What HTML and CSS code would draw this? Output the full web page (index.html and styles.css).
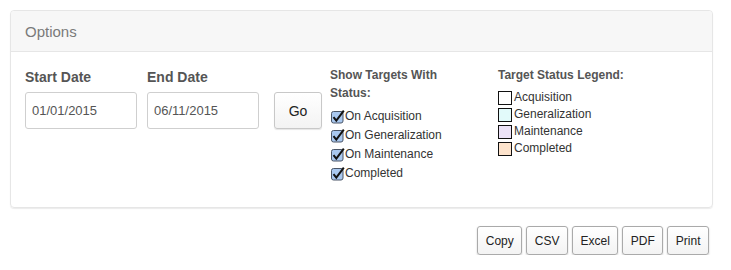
FILE: index.html
```html
<!DOCTYPE html>
<html lang="en">
<head>
  <meta charset="UTF-8" />
  <title>Options</title>
  <link rel="stylesheet" href="styles.css">
</head>
<body>
  <section class="panel">
    <div class="panel-heading">Options</div>
    <div class="panel-body">
      <div class="field">
        <label class="field-label">Start Date</label>
        <input class="date-input" type="text" value="01/01/2015">
      </div>
      <div class="field">
        <label class="field-label">End Date</label>
        <input class="date-input" type="text" value="06/11/2015">
      </div>
      <button class="btn btn-go">Go</button>

      <div class="status">
        <div class="col-title">Show Targets With Status:</div>
        <label class="check"><span class="box"><svg viewBox="0 0 14 14" width="14" height="14"><rect x="0.5" y="1.5" width="11.5" height="11.5" rx="2" fill="#a9c8ef" stroke="#4a5566"/><path d="M2.5 7.2 L5.3 10.6 L12.8 0.6" fill="none" stroke="#111" stroke-width="2"/></svg></span>On Acquisition</label>
        <label class="check"><span class="box"><svg viewBox="0 0 14 14" width="14" height="14"><rect x="0.5" y="1.5" width="11.5" height="11.5" rx="2" fill="#a9c8ef" stroke="#4a5566"/><path d="M2.5 7.2 L5.3 10.6 L12.8 0.6" fill="none" stroke="#111" stroke-width="2"/></svg></span>On Generalization</label>
        <label class="check"><span class="box"><svg viewBox="0 0 14 14" width="14" height="14"><rect x="0.5" y="1.5" width="11.5" height="11.5" rx="2" fill="#a9c8ef" stroke="#4a5566"/><path d="M2.5 7.2 L5.3 10.6 L12.8 0.6" fill="none" stroke="#111" stroke-width="2"/></svg></span>On Maintenance</label>
        <label class="check"><span class="box"><svg viewBox="0 0 14 14" width="14" height="14"><rect x="0.5" y="1.5" width="11.5" height="11.5" rx="2" fill="#a9c8ef" stroke="#4a5566"/><path d="M2.5 7.2 L5.3 10.6 L12.8 0.6" fill="none" stroke="#111" stroke-width="2"/></svg></span>Completed</label>
      </div>

      <div class="legend">
        <div class="col-title">Target Status Legend:</div>
        <div class="legend-item"><span class="swatch acq"></span>Acquisition</div>
        <div class="legend-item"><span class="swatch gen"></span>Generalization</div>
        <div class="legend-item"><span class="swatch main"></span>Maintenance</div>
        <div class="legend-item"><span class="swatch done"></span>Completed</div>
      </div>
    </div>
  </section>

  <div class="export">
    <button class="btn btn-export">Copy</button>
    <button class="btn btn-export">CSV</button>
    <button class="btn btn-export">Excel</button>
    <button class="btn btn-export">PDF</button>
    <button class="btn btn-export">Print</button>
  </div>
</body>
</html>
```

FILE: styles.css
```css
body {
  margin: 0;
  padding: 10px 18px 0 10px;
  font-family: 'Liberation Sans', Arial, sans-serif;
  background: #fff;
  color: #333;
}

.panel {
  width: 703px;
  border: 1px solid #e6e6e6;
  border-radius: 4px;
  box-shadow: 0 1px 1px rgba(0,0,0,0.08);
  box-sizing: border-box;
}

.panel-heading {
  height: 41px;
  line-height: 41px;
  padding: 0 14px;
  background: #f7f7f7;
  border-bottom: 1px solid #e6e6e6;
  border-radius: 4px 4px 0 0;
  color: #7a7a7a;
  font-size: 15px;
  box-sizing: border-box;
}

.panel-body {
  display: flex;
  align-items: flex-start;
  padding: 14px 14px 24px;
}

.field {
  display: flex;
  flex-direction: column;
  margin-right: 10px;
}

.field-label {
  font-size: 14px;
  font-weight: bold;
  color: #555;
  line-height: 22px;
  margin-bottom: 4px;
}

.date-input {
  width: 112px;
  height: 37px;
  box-sizing: border-box;
  border: 1px solid #cfcfcf;
  border-radius: 3px;
  padding: 0 6px;
  font-family: inherit;
  font-size: 13px;
  color: #555;
}

.btn {
  font-family: inherit;
  background: linear-gradient(#fff, #f3f3f3);
  border: 1px solid #c8c8c8;
  border-radius: 3px;
  color: #222;
  cursor: pointer;
}

.btn-go {
  margin-top: 26px;
  margin-left: 5px;
  width: 48px;
  height: 37px;
  font-size: 14px;
  box-shadow: 0 1px 1px rgba(0,0,0,0.1);
}

.status {
  margin-left: 8px;
  width: 140px;
}

.col-title {
  font-size: 12px;
  font-weight: bold;
  color: #555;
  line-height: 18px;
}

.status .col-title {
  margin-bottom: 5px;
}

.check {
  display: flex;
  align-items: center;
  font-size: 12px;
  line-height: 19px;
  color: #333;
}

.box {
  display: inline-flex;
  width: 14px;
  height: 14px;
  margin-left: 1px;
}

.legend {
  margin-left: 28px;
}

.legend .col-title {
  margin-bottom: 5px;
}

.legend-item {
  display: flex;
  align-items: center;
  font-size: 12px;
  line-height: 17px;
  color: #333;
}

.swatch {
  width: 12px;
  height: 12px;
  border: 1px solid #111;
  margin-right: 2px;
}

.acq { background: #fff; }
.gen { background: #e2fafa; }
.main { background: #ece2f7; }
.done { background: #fde3cc; }

.export {
  display: flex;
  justify-content: flex-end;
  gap: 4px;
  width: 699px;
  margin-top: 18px;
}

.btn-export {
  height: 29px;
  padding: 0 7.5px;
  font-size: 12px;
  border-color: #aaa;
  box-shadow: 0 1px 2px rgba(0,0,0,0.2);
}
```
